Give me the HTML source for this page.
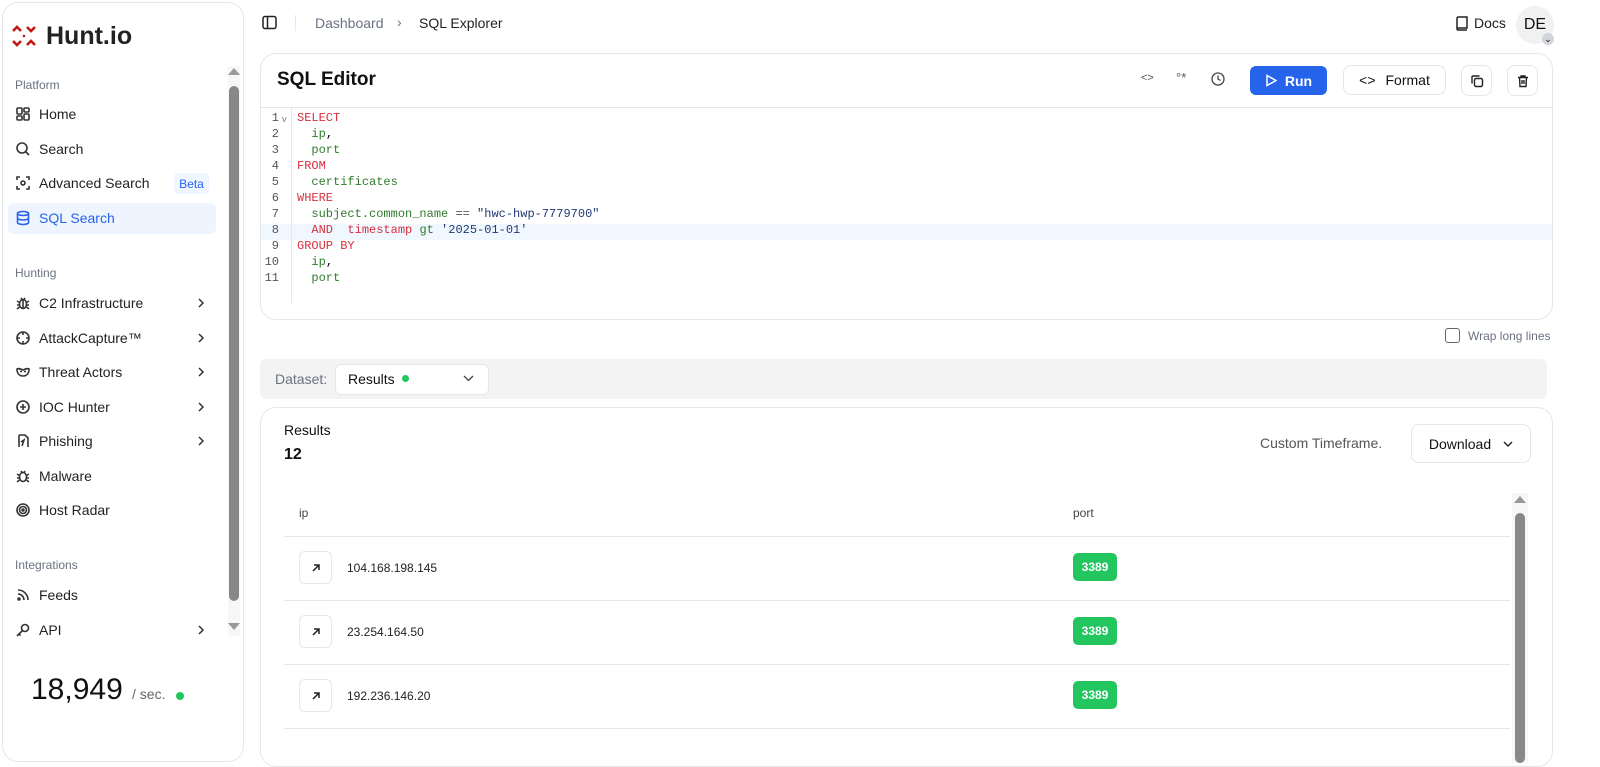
<!DOCTYPE html>
<html><head><meta charset="utf-8">
<style>
*{box-sizing:border-box;margin:0;padding:0}
body{width:1600px;height:756px;overflow:hidden;background:#fff;font-family:"Liberation Sans",sans-serif;color:#111;position:relative}
.a{position:absolute}
.side{left:2px;top:2px;width:242px;height:760px;border:1px solid #e5e7eb;border-radius:16px;background:#fff}
.sec{font-size:12px;color:#6b7280;left:15px}
.item{left:15px;font-size:14px;color:#222;display:flex;align-items:center;gap:8px;height:20px}
.item svg{width:16px;height:16px;stroke:#333;fill:none;stroke-width:1.6}
.chev{left:197px;width:8px;height:12px}
.code{font-family:"Liberation Mono",monospace;font-size:12px;line-height:16px;white-space:pre}
.kw{color:#d7303c}.id{color:#2f7a2a}.st{color:#1f3a75}.op{color:#555}
.btn{border:1px solid #e5e7eb;border-radius:8px;background:#fff;display:flex;align-items:center;justify-content:center}
.row{left:284px;width:1226px;height:1px;background:#e5e7eb}
.port{left:1073px;width:44px;height:28px;background:#22c55e;border-radius:5px;color:#fff;font-size:12px;font-weight:bold;display:flex;align-items:center;justify-content:center}
.arr{left:299px;width:33px;height:33px;border:1px solid #e5e7eb;border-radius:6px;display:flex;align-items:center;justify-content:center}
.ipt{left:347px;font-size:12px;color:#222}
</style></head><body>
<svg width="0" height="0" style="position:absolute"><defs><symbol id="cv" viewBox="0 0 8 12"><path d="M2 2l4 4-4 4" fill="none" stroke="#333" stroke-width="1.5"/></symbol></defs></svg>
<div class="a side"></div>
<svg class="a" style="left:11px;top:23px" width="26" height="26" viewBox="0 0 26 26" fill="none" stroke="#c01818" stroke-width="2.6"><path d="M2 8 L6 4 L10 8"/><path d="M16 4 L20 8 L24 4"/><path d="M2 18 L6 22 L10 18"/><path d="M16 22 L20 18 L24 22"/><circle cx="13" cy="13" r="1.3" fill="#c01818" stroke="none"/></svg>
<div class="a" style="left:46px;top:22px;font-size:25px;font-weight:bold;color:#222">Hunt.io</div>
<div class="a" style="left:228px;top:66px;width:12px;height:570px;background:#f7f7f7"></div>
<div class="a" style="left:228px;top:68px;width:0;height:0;border-left:6px solid transparent;border-right:6px solid transparent;border-bottom:7px solid #999"></div>
<div class="a" style="left:229px;top:86px;width:10px;height:515px;background:#888;border-radius:5px"></div>
<div class="a" style="left:228px;top:623px;width:0;height:0;border-left:6px solid transparent;border-right:6px solid transparent;border-top:7px solid #999"></div>

<div class="a sec" style="top:78px">Platform</div>
<div class="a item" style="top:104px"><svg viewBox="0 0 16 16"><rect x="2" y="2" width="5" height="6" rx="1"/><rect x="9" y="2" width="5" height="4" rx="1"/><rect x="2" y="10" width="5" height="4" rx="1"/><rect x="9" y="8" width="5" height="6" rx="1"/></svg>Home</div>
<div class="a item" style="top:139px"><svg viewBox="0 0 16 16"><circle cx="7" cy="7" r="5"/><path d="M11 11l3 3"/></svg>Search</div>
<div class="a item" style="top:173px"><svg viewBox="0 0 16 16"><path d="M2 5V2h3M11 2h3v3M14 11v3h-3M5 14H2v-3"/><circle cx="8" cy="8" r="2"/></svg>Advanced Search</div>
<div class="a" style="left:174px;top:173px;width:35px;height:21px;background:#eff6ff;border-radius:4px;color:#2563eb;font-size:12px;display:flex;align-items:center;justify-content:center">Beta</div>
<div class="a" style="left:8px;top:203px;width:208px;height:31px;background:#eef5ff;border-radius:6px"></div>
<div class="a item" style="top:208px;color:#2563eb"><svg viewBox="0 0 16 16" style="stroke:#2563eb"><ellipse cx="8" cy="3.5" rx="5.5" ry="2"/><path d="M2.5 3.5v9c0 1.1 2.5 2 5.5 2s5.5-.9 5.5-2v-9M2.5 8c0 1.1 2.5 2 5.5 2s5.5-.9 5.5-2"/></svg>SQL Search</div>

<div class="a sec" style="top:266px">Hunting</div>
<div class="a item" style="top:293px"><svg viewBox="0 0 16 16"><ellipse cx="8" cy="9" rx="3.5" ry="4.5"/><path d="M8 5v8M2 6l2.5 1.5M14 6l-2.5 1.5M2 10h2.5M14 10h-2.5M2 14l2.5-2M14 14l-2.5-2M6 3l1 1.5M10 3l-1 1.5"/></svg>C2 Infrastructure</div><svg class="a chev" style="top:297px"><use href="#cv"/></svg>
<div class="a item" style="top:328px"><svg viewBox="0 0 16 16"><circle cx="8" cy="8" r="6"/><path d="M8 2v3M8 11v3M2 8h3M11 8h3"/></svg>AttackCapture™</div><svg class="a chev" style="top:332px"><use href="#cv"/></svg>
<div class="a item" style="top:362px"><svg viewBox="0 0 16 16"><path d="M2 5c2-1 4 0 6 1 2-1 4-2 6-1 0 4-2 7-6 7S2 9 2 5z"/><path d="M5 7.5h2M9 7.5h2"/></svg>Threat Actors</div><svg class="a chev" style="top:366px"><use href="#cv"/></svg>
<div class="a item" style="top:397px"><svg viewBox="0 0 16 16"><circle cx="8" cy="8" r="6"/><path d="M8 5v6M5 8h6"/></svg>IOC Hunter</div><svg class="a chev" style="top:401px"><use href="#cv"/></svg>
<div class="a item" style="top:431px"><svg viewBox="0 0 16 16"><path d="M4 14V3a1 1 0 0 1 1-1h5l3 3v9"/><path d="M7 13l2-6-3 2"/></svg>Phishing</div><svg class="a chev" style="top:435px"><use href="#cv"/></svg>
<div class="a item" style="top:466px"><svg viewBox="0 0 16 16"><ellipse cx="8" cy="9" rx="3.5" ry="4.5"/><path d="M2 6l2.5 1.5M14 6l-2.5 1.5M2 10h2.5M14 10h-2.5M2 14l2.5-2M14 14l-2.5-2M6 3l1 1.5M10 3l-1 1.5"/></svg>Malware</div>
<div class="a item" style="top:500px"><svg viewBox="0 0 16 16"><circle cx="8" cy="8" r="6"/><circle cx="8" cy="8" r="3.5"/><circle cx="8" cy="8" r="1"/></svg>Host Radar</div>

<div class="a sec" style="top:558px">Integrations</div>
<div class="a item" style="top:585px"><svg viewBox="0 0 16 16"><path d="M3 3a10 10 0 0 1 10 10M3 7a6 6 0 0 1 6 6"/><circle cx="4" cy="12" r="1"/></svg>Feeds</div>
<div class="a item" style="top:620px"><svg viewBox="0 0 16 16"><circle cx="10" cy="6" r="3.5"/><path d="M7.5 8.5L2 14M4 12l1.5 1.5"/></svg>API</div><svg class="a chev" style="top:624px"><use href="#cv"/></svg>

<div class="a" style="left:31px;top:673px;font-size:30px;color:#111">18,949</div>
<div class="a" style="left:132px;top:686px;font-size:14px;color:#666">/ sec.</div>
<div class="a" style="left:176px;top:692px;width:8px;height:8px;border-radius:50%;background:#22c55e"></div>

<svg class="a" style="left:262px;top:15px" width="15" height="15" viewBox="0 0 15 15" fill="none" stroke="#222" stroke-width="1.5"><rect x="1" y="1.5" width="13" height="12" rx="2"/><path d="M5.5 1.5v12"/></svg>
<div class="a" style="left:295px;top:15px;width:1px;height:16px;background:#e5e7eb"></div>
<div class="a" style="left:315px;top:15px;font-size:14px;color:#6b7280">Dashboard</div>
<div class="a" style="left:397px;top:14px;font-size:14px;color:#6b7280">&#8250;</div>
<div class="a" style="left:419px;top:15px;font-size:14px;color:#222">SQL Explorer</div>
<svg class="a" style="left:1455px;top:16px" width="14" height="15" viewBox="0 0 14 15" fill="none" stroke="#222" stroke-width="1.5"><path d="M2 2.5A1.5 1.5 0 0 1 3.5 1H12v11H3.5A1.5 1.5 0 0 0 2 13.5zM2 13.5A1.5 1.5 0 0 0 3.5 14H12"/></svg>
<div class="a" style="left:1474px;top:15px;font-size:14px;color:#222">Docs</div>
<div class="a" style="left:1516px;top:6px;width:38px;height:38px;border-radius:50%;background:#f1f1f1;font-size:16px;display:flex;align-items:center;justify-content:center;color:#111">DE</div>
<div class="a" style="left:1542px;top:33px;width:12px;height:12px;border-radius:50%;background:#d1d5db;font-size:9px;display:flex;align-items:center;justify-content:center">&#8964;</div>

<div class="a" style="left:260px;top:53px;width:1293px;height:267px;border:1px solid #e5e7eb;border-radius:16px"></div>
<div class="a" style="left:261px;top:107px;width:1291px;height:1px;background:#e5e7eb"></div>
<div class="a" style="left:277px;top:69px;font-size:19px;font-weight:bold">SQL Editor</div>
<div class="a" style="left:1141px;top:72px;font-size:11px;color:#555">&lt;&gt;</div>
<div class="a" style="left:1176px;top:70px;font-size:13px;color:#555">°*</div>
<svg class="a" style="left:1211px;top:72px" width="14" height="14" viewBox="0 0 14 14" fill="none" stroke="#444" stroke-width="1.3"><circle cx="7" cy="7" r="6"/><path d="M7 3.5V7l2.5 1.5"/></svg>
<div class="a" style="left:1250px;top:66px;width:77px;height:29px;background:#2563eb;border-radius:6px;color:#fff;font-size:14px;font-weight:bold;display:flex;align-items:center;justify-content:center;gap:8px"><svg width="12" height="13" viewBox="0 0 12 13" fill="none" stroke="#fff" stroke-width="1.5"><path d="M2 1.5l9 5-9 5z"/></svg>Run</div>
<div class="a btn" style="left:1343px;top:65px;width:103px;height:30px;font-size:14px;gap:10px"><span>&lt;&gt;</span>Format</div>
<div class="a btn" style="left:1461px;top:65px;width:31px;height:31px"><svg width="14" height="14" viewBox="0 0 14 14" fill="none" stroke="#222" stroke-width="1.4"><rect x="4.5" y="4.5" width="8" height="8" rx="1.5"/><path d="M2 9.5V3a1 1 0 0 1 1-1h6.5"/></svg></div>
<div class="a btn" style="left:1507px;top:65px;width:31px;height:31px"><svg width="14" height="14" viewBox="0 0 14 14" fill="none" stroke="#222" stroke-width="1.4"><path d="M2 3.5h10M5 3.5V2h4v1.5M3.5 3.5l.5 9h6l.5-9M6 6v4M8 6v4"/></svg></div>

<div class="a" style="left:261px;top:224px;width:1291px;height:16px;background:#f0f7ff"></div>
<div class="a" style="left:291px;top:108px;width:1px;height:195px;background:#e5e7eb"></div>
<div class="a code" style="left:263px;top:110px;width:16px;text-align:right;color:#555">1
2
3
4
5
6
7
8
9
10
11</div>
<div class="a" style="left:282px;top:114px;font-size:9px;color:#777">v</div>
<div class="a code" style="left:297px;top:110px"><span class="kw">SELECT</span>
  <span class="id">ip</span>,
  <span class="id">port</span>
<span class="kw">FROM</span>
  <span class="id">certificates</span>
<span class="kw">WHERE</span>
  <span class="id">subject.common_name</span> <span class="op">==</span> <span class="st">"hwc-hwp-7779700"</span>
  <span class="kw">AND</span>  <span class="kw">timestamp</span> <span class="id">gt</span> <span class="st">'2025-01-01'</span>
<span class="kw">GROUP BY</span>
  <span class="id">ip</span>,
  <span class="id">port</span></div>

<div class="a" style="left:1445px;top:328px;width:15px;height:15px;border:1.5px solid #666;border-radius:3px"></div>
<div class="a" style="left:1468px;top:329px;font-size:12px;color:#6b7280">Wrap long lines</div>

<div class="a" style="left:260px;top:359px;width:1287px;height:40px;background:#f3f3f3;border-radius:6px"></div>
<div class="a" style="left:275px;top:371px;font-size:14px;color:#6b7280">Dataset:</div>
<div class="a" style="left:335px;top:364px;width:154px;height:31px;background:#fff;border:1px solid #e5e7eb;border-radius:6px"></div>
<div class="a" style="left:348px;top:371px;font-size:14px;color:#111">Results</div>
<div class="a" style="left:402px;top:375px;width:7px;height:7px;border-radius:50%;background:#22c55e"></div>
<svg class="a" style="left:463px;top:375px" width="11" height="7" viewBox="0 0 11 7" fill="none" stroke="#444" stroke-width="1.3"><path d="M1 1l4.5 4.5L10 1"/></svg>

<div class="a" style="left:260px;top:407px;width:1293px;height:360px;border:1px solid #e5e7eb;border-radius:16px"></div>
<div class="a" style="left:284px;top:422px;font-size:14px;color:#111">Results</div>
<div class="a" style="left:284px;top:446px;font-size:16px;font-weight:bold">12</div>
<div class="a" style="left:1260px;top:435px;font-size:14px;color:#555">Custom Timeframe.</div>
<div class="a btn" style="left:1411px;top:424px;width:120px;height:39px;font-size:14px;gap:12px">Download <svg width="10" height="6" viewBox="0 0 10 6" fill="none" stroke="#222" stroke-width="1.4"><path d="M1 1l4 4 4-4"/></svg></div>

<div class="a" style="left:299px;top:506px;font-size:12px;color:#444">ip</div>
<div class="a" style="left:1073px;top:506px;font-size:12px;color:#444">port</div>
<div class="a row" style="top:536px"></div>
<div class="a row" style="top:600px"></div>
<div class="a row" style="top:664px"></div>
<div class="a row" style="top:728px"></div>

<div class="a arr" style="top:551px"><svg width="10" height="10" viewBox="0 0 10 10" fill="none" stroke="#222" stroke-width="1.5"><path d="M2 8l6-6M3 2h5v5"/></svg></div>
<div class="a ipt" style="top:561px">104.168.198.145</div>
<div class="a port" style="top:553px">3389</div>
<div class="a arr" style="top:615px"><svg width="10" height="10" viewBox="0 0 10 10" fill="none" stroke="#222" stroke-width="1.5"><path d="M2 8l6-6M3 2h5v5"/></svg></div>
<div class="a ipt" style="top:625px">23.254.164.50</div>
<div class="a port" style="top:617px">3389</div>
<div class="a arr" style="top:679px"><svg width="10" height="10" viewBox="0 0 10 10" fill="none" stroke="#222" stroke-width="1.5"><path d="M2 8l6-6M3 2h5v5"/></svg></div>
<div class="a ipt" style="top:689px">192.236.146.20</div>
<div class="a port" style="top:681px">3389</div>

<div class="a" style="left:1512px;top:493px;width:16px;height:270px;background:#f7f7f7"></div>
<div class="a" style="left:1514px;top:496px;width:0;height:0;border-left:6px solid transparent;border-right:6px solid transparent;border-bottom:7px solid #999"></div>
<div class="a" style="left:1515px;top:513px;width:10px;height:250px;background:#888;border-radius:5px"></div>
</body></html>
